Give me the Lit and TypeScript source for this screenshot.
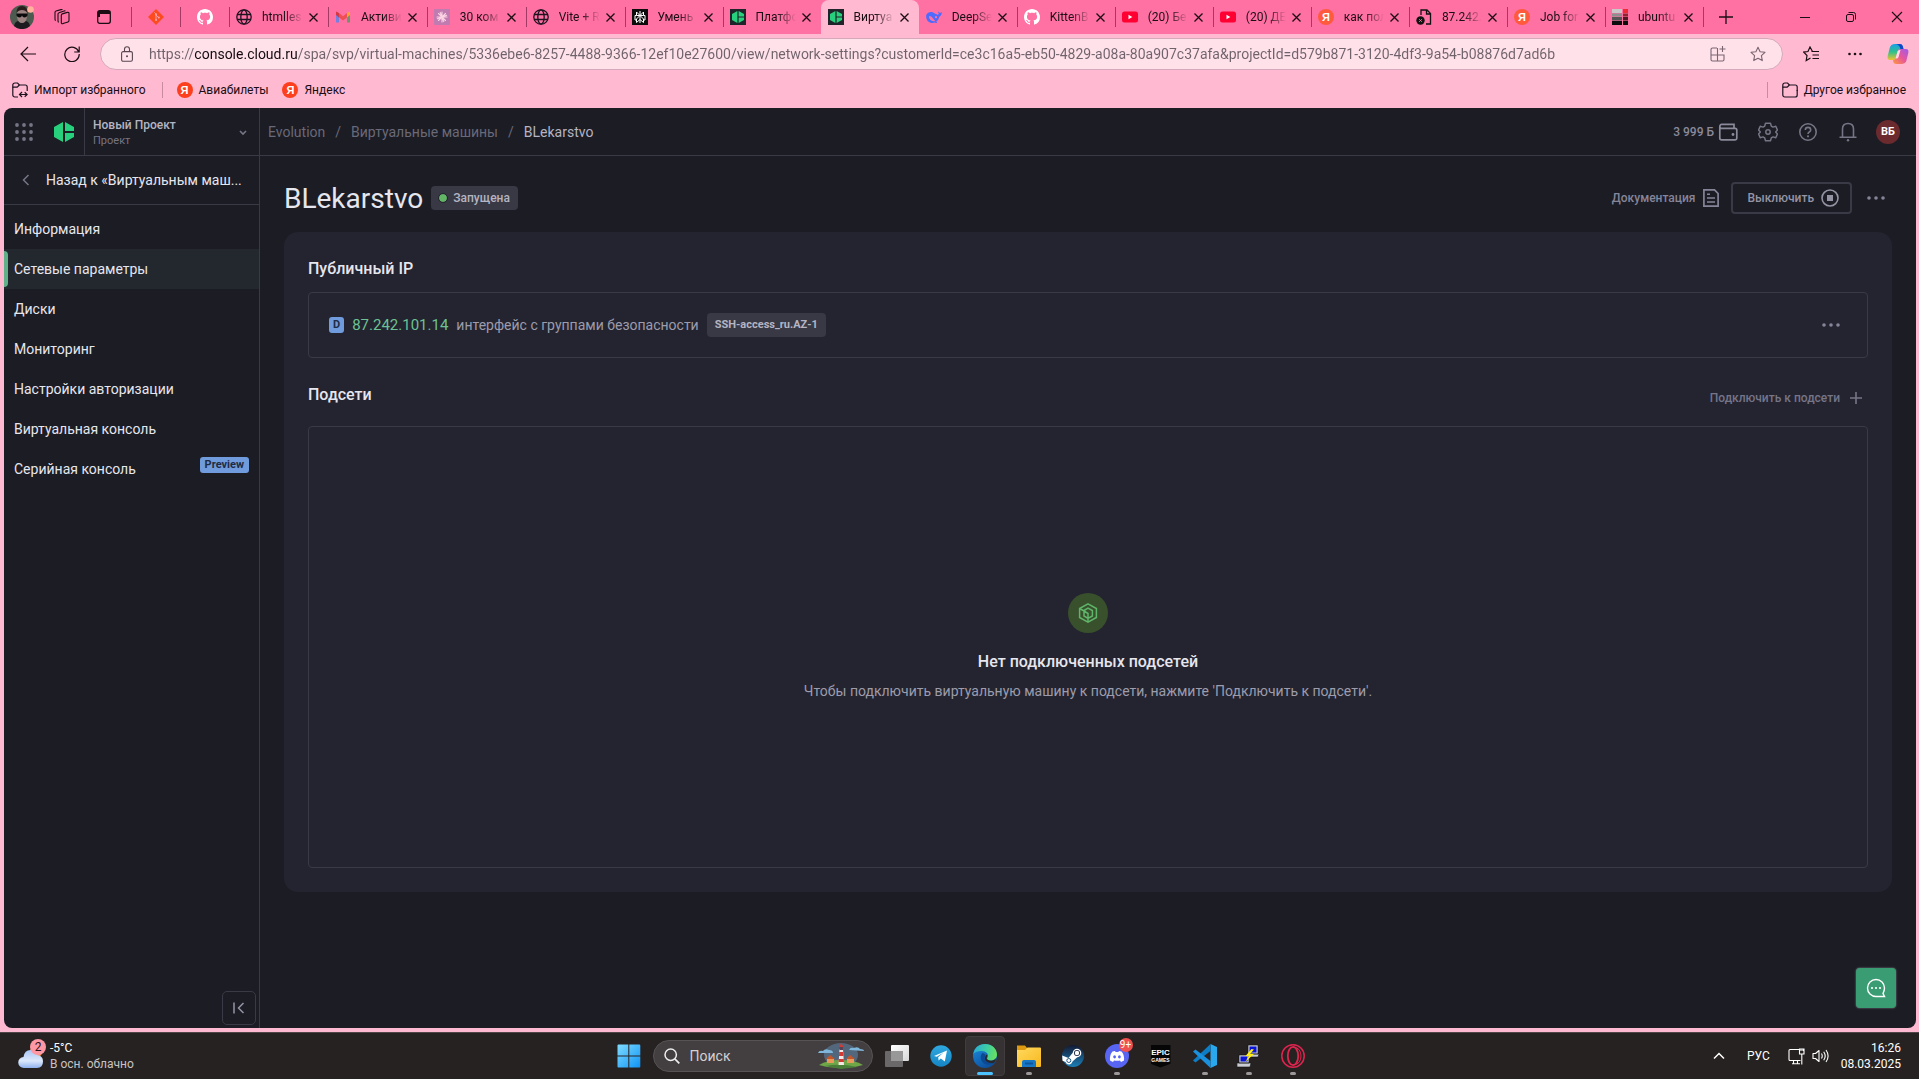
import { LitElement, html, svg, css, type TemplateResult } from "lit";
import { customElement } from "lit/decorators.js";
import { classMap } from "lit/directives/class-map.js";

const icon = (w: number, h: number, box: string, body: unknown) =>
  html`<svg width=${w} height=${h} viewBox=${box} fill="none" aria-hidden="true">${body}</svg>`;

const base = css`
  :host, *, *::before, *::after { box-sizing: border-box; }
  svg { display: block; flex: none; }
  button, input { font: inherit; color: inherit; margin: 0; padding: 0; border: 0; background: none; outline: none; }
  button { display: flex; align-items: center; justify-content: center; cursor: pointer; white-space: nowrap; }
  a { color: inherit; text-decoration: none; white-space: nowrap; }
  h1, h2, p { margin: 0; font-weight: 400; }
`;

/* ---------- favicons ---------- */

const GITHUB = "M8 0C3.58 0 0 3.58 0 8c0 3.54 2.29 6.53 5.47 7.59.4.07.55-.17.55-.38 0-.19-.01-.82-.01-1.49-2.01.37-2.53-.49-2.69-.94-.09-.23-.48-.94-.82-1.13-.28-.15-.68-.52-.01-.53.63-.01 1.08.58 1.23.82.72 1.21 1.87.87 2.33.66.07-.52.28-.87.51-1.07-1.78-.2-3.64-.89-3.64-3.95 0-.87.31-1.59.82-2.15-.08-.2-.36-1.02.08-2.12 0 0 .67-.21 2.2.82.64-.18 1.32-.27 2-.27s1.36.09 2 .27c1.53-1.04 2.2-.82 2.2-.82.44 1.1.16 1.92.08 2.12.51.56.82 1.27.82 2.15 0 3.07-1.87 3.75-3.65 3.95.29.25.54.73.54 1.48 0 1.07-.01 1.93-.01 2.2 0 .21.15.46.55.38A8.01 8.01 0 0 0 16 8c0-4.42-3.58-8-8-8z";

const github = icon(16, 16, "0 0 16 16", svg`<path fill="#fff" d=${GITHUB} />`);

const globe = icon(16, 16, "0 0 16 16", svg`
  <g stroke="#1d1220" stroke-width="1.3">
    <circle cx="8" cy="8" r="7.2" /><ellipse cx="8" cy="8" rx="3.2" ry="7.2" />
    <path d="M1.3 5.5h13.4M1.3 10.5h13.4" />
  </g>`);

const gmail = icon(16, 16, "0 0 16 16", svg`
  <g opacity=".72">
    <path d="M1 4.5v9h3V7z" fill="#4285f4" /><path d="M15 4.5v9h-3V7z" fill="#34a853" />
    <path d="M12 4l3-1.5V6l-3 2.4z" fill="#fbbc04" /><path d="M1 2.5L4 4v4.4L1 6z" fill="#c5221f" />
    <path d="M4 4l4 3.2L12 4v4.4l-4 3.1-4-3.1z" fill="#ea4335" />
  </g>`);

const burst = icon(16, 16, "0 0 16 16", svg`
  <rect width="16" height="16" rx="1" fill="#c07bb0" />
  <g stroke="#fbd3e4" stroke-width="1.1" stroke-linecap="round">
    <path d="M8 3v10M3 8h10M4.5 4.5l7 7M11.5 4.5l-7 7M6.2 3.4l3.6 9.2M3.4 9.8l9.2-3.6" />
  </g>`);

const perplexity = icon(16, 16, "0 0 16 16", svg`
  <rect width="16" height="16" fill="#0b0b0b" />
  <g stroke="#fff" stroke-width="1">
    <path d="M8 2v12M4.5 3L8 6.5 11.5 3v3.5h-7zM4.5 6.5H3v4.5h1.5M11.5 6.5H13v4.5h-1.5M8 6.5L4.5 10v3.5L8 10.5l3.5 3V10z" />
  </g>`);

const CLOUD_MARK = svg`
  <path d="M9 0v20L0 15V5z" /><path d="M11 0l9 5v4h-9z" /><path d="M11 11h9v4l-9 5z" />`;

const cloudFav = icon(16, 16, "0 0 16 16", svg`
  <rect width="16" height="16" fill="#20242a" />
  <g fill="#26d07c" transform="translate(2 2) scale(.6)">${CLOUD_MARK}</g>`);

const deepseek = icon(16, 16, "0 0 16 16", svg`
  <path fill="#4d6bfe" d="M15.8 3.3c-.7-.3-1 .4-1.5.6-.9-.1-1.6-.7-1.8-1.6-.3.6-.3 1.6.4 2.3-.6.9-.8 1.1-1.4 1.1C10 5.1 8.600 4 7.100 3.400 4.500 2.500 1.500 3.300.5 5.500c-.9 2.200-.1 5.100 1.500 6.700 1.800 1.800 4.400 2.300 6.700 1.400.8.300 1.700.5 2.500.1-.2-.4-.7-.5-1-.9 1.700-1.200 2.700-3.100 3.100-5.100C14.900 6.900 15.900 5.400 15.800 3.300z" />
  <path fill="#ff70a3" d="M3 7c2 .1 3.300 1.300 4.300 2.800.6.9 1.200 1.700 2.100 2.100C6 13 2.800 10.600 3 7z" />
  <circle cx="10" cy="8.200" r="1.100" fill="#ff70a3" />`);

const youtube = icon(16, 16, "0 0 16 16", svg`
  <rect y="2.500" width="16" height="11" rx="2.500" fill="#f03" /><path d="M6.500 5.800L10.300 8l-3.800 2.200z" fill="#fff" />`);

const docX = icon(16, 16, "0 0 16 16", svg`
  <path d="M5 6V1h6l3.500 3.500V15H10M10.500 1v4h4" stroke="#111" stroke-width="1.300" />
  <circle cx="4.500" cy="11.500" r="4.200" fill="#111" />
  <path d="M3.200 10.200l2.600 2.600M5.800 10.200l-2.600 2.600" stroke="#ff70a3" />`);

const ubuntuGrid = icon(16, 16, "0 0 16 16", svg`
  <path fill="#c9c9c9" d="M0 0h10v4H0z" /><path fill="#8f8f8f" d="M0 4.500h10v3H0z" />
  <path fill="#555" d="M0 8h10v3.500H0z" /><path fill="#0c0c0c" d="M0 12h10v4H0z" />
  <path fill="#ee2a35" d="M11 0h5v4h-5z" /><path fill="#8c2530" d="M11 4.500h5v3h-5z" />
  <path fill="#4d1a22" d="M11 8h5v3.500h-5z" /><path fill="#0c0c0c" d="M11 12h5v4h-5z" />`);

const yandex = html`<span class="ya">Я</span>`;

interface Tab { title: string; icon: TemplateResult; active?: boolean; }

const TABS: Tab[] = [
  { title: "htmlles", icon: globe },
  { title: "Активи", icon: gmail },
  { title: "30 ком", icon: burst },
  { title: "Vite + R", icon: globe },
  { title: "Умень", icon: perplexity },
  { title: "Платфо", icon: cloudFav },
  { title: "Виртуа", icon: cloudFav, active: true },
  { title: "DeepSe", icon: deepseek },
  { title: "KittenB", icon: github },
  { title: "(20) Бе", icon: youtube },
  { title: "(20) ДЕ", icon: youtube },
  { title: "как пол", icon: yandex },
  { title: "87.242.", icon: docX },
  { title: "Job for", icon: yandex },
  { title: "ubuntu", icon: ubuntuGrid },
];

const URL_TEXT =
  "https://console.cloud.ru/spa/svp/virtual-machines/5336ebe6-8257-4488-9366-12ef10e27600/view/network-settings?customerId=ce3c16a5-eb50-4829-a08a-80a907c37afa&projectId=d579b871-3120-4df3-9a54-b08876d7ad6b";

const folder = (extra: unknown) => icon(16, 16, "0 0 16 16", svg`
  <g stroke="#1d1220" stroke-width="1.200">
    <path d="M.8 5.200V3a2 2 0 0 1 2-2h2.700l1.900 2h5.800a2 2 0 0 1 2 2v4" /><path d="M.8 5.200h4.400l2.200-2.200" />${extra}
  </g>`);

@customElement("browser-chrome")
export class BrowserChrome extends LitElement {
  static styles = [base, css`
    :host { display: block; font: 12px/16px Roboto, "Noto Sans", sans-serif; color: #1a0d14; background: #ffb9d0; }
    .strip { display: flex; height: 34px; background: #ff70a3; }
    .pinned { display: flex; width: 229px; }
    .lead { display: flex; align-items: center; width: 131px; padding-left: 10px; gap: 20px; }
    .lead .vertical { margin-left: 7px; }
    .pin { width: 49px; position: relative; }
    .pin::before, .tab::before { content: ""; position: absolute; left: 0; top: 7px; width: 1px; height: 20px; background: #a33a64; }
    .tabs { display: flex; flex: 1; min-width: 0; }
    .tab { position: relative; display: flex; align-items: center; flex: 98; min-width: 0; padding: 0 10px 0 7px; }
    .tab:nth-child(-n + 4) { flex-grow: 99; }
    .tab.active { background: #ffb9d0; border-radius: 8px 8px 0 0; }
    .tab.active::before, .tab.active + .tab::before { display: none; }
    .title { flex: 1; min-width: 0; justify-content: flex-start; overflow: hidden; margin: 0 4px 0 10px;
      mask-image: linear-gradient(90deg, #000 50%, transparent 95%); }
    .ya { display: flex; align-items: center; justify-content: center; flex: none; width: 16px; height: 16px;
      border-radius: 50%; background: #fc3f1d; color: #fff; font: 700 11px/16px "Liberation Sans", sans-serif; }
    .tab .ya { background: #ff5a3c; }
    .end { position: relative; display: flex; align-items: center; width: 216px; padding-right: 16px; }
    .end::before { content: ""; width: 1px; height: 20px; background: #a33a64; margin-right: 15px; }
    .window { display: flex; align-items: center; gap: 34px; margin-left: auto; }
    .bar { display: flex; align-items: center; height: 40px; padding: 0 10px 0 20px; }
    .bar .reload { margin: 0 20px 0 28px; }
    .field { display: flex; align-items: center; flex: 1; height: 32px; margin-right: 20px; padding: 0 16px 0 20px;
      border: 1px solid #d5a9bb; border-radius: 16px; background: #ffe1ea; color: #6a5560; }
    .field input { flex: 1; min-width: 0; margin: 0 20px 0 16px; font-size: 14px; line-height: 20px; color: transparent;
      background: linear-gradient(90deg, #6f626a 46px, #120a0e 46px, #120a0e 148px, #6f626a 148px);
      -webkit-background-clip: text; background-clip: text; }
    .right { display: flex; align-items: center; gap: 24px; }
    .fav { margin-right: 4px; }
    .marks { display: flex; align-items: center; height: 32px; padding: 0 13px 0 12px; gap: 14px; }
    .marks a { display: flex; align-items: center; gap: 6px; }
    .marks i { width: 1px; height: 16px; margin-left: 2px; background: #c98ba2; }
    .marks .push { margin-left: auto; }
  `];

  render() {
    const close = icon(9, 9, "0 0 9 9", svg`<path d="M.5.500l8 8M8.500.500l-8 8" stroke="#1a0d14" stroke-width="1.300" />`);
    return html`
      <div class="strip">
        <div class="pinned">
          <div class="lead">
            <button aria-label="Профиль">${icon(24, 24, "0 0 24 24", svg`
              <circle cx="12" cy="12" r="12" fill="#4d5a50" /><path d="M4 21q1-5 5-5h6q4 0 5 5a12 12 0 0 1-16 0z" fill="#1b1b20" />
              <path d="M7 8q0-6 5-6t5 6v4q-1 6-5 6t-5-6z" fill="#9a8280" /><path d="M6.500 8q0-7 5.500-7t5.500 7q-2-3-5.500-3t-5.500 3z" fill="#2b1d1c" />
              <path d="M6.500 8.500h11v2q-1 2-3 2t-2.500-2q-.5 2-2.500 2t-3-2z" fill="#0a0a0c" />
              <circle cx="20.500" cy="4.500" r="3.300" fill="#ffb39d" />`)}</button>
            <button aria-label="Рабочие области">${icon(16, 16, "0 0 16 16", svg`
              <g stroke="#1a0d14" stroke-width="1.100" stroke-linejoin="round"><path d="M7.300 6.200q0-1 1-1.300l5-1.500q1.700-.4 1.700 1.200v7q0 1-1 1.300l-5 1.700q-1.700.5-1.700-1.200z" />
              <path d="M4.800 13.300q-.8-.3-.8-1.300V5q0-1 1-1.300l5-1.700q1-.3 1.400.3M1.800 11.500q-.8-.3-.8-1.300V3.300q0-1 1-1.300L7 .600q1-.3 1.400.3" /></g>`)}</button>
            <button class="vertical" aria-label="Вертикальные вкладки">${icon(14, 14, "0 0 14 14", svg`
              <rect x=".7" y=".7" width="12.600" height="12.600" rx="2" stroke="#1a0d14" stroke-width="1.300" />
              <path d="M1 1h12v3H1zM1 1h2v6H1z" fill="#1a0d14" />`)}</button>
          </div>
          <button class="pin" aria-label="Git">${icon(16, 16, "0 0 16 16", svg`
            <path d="M8 0l8 8-8 8-8-8z" fill="#fc4c1f" /><path d="M6.500 3.500L8 5v6M8 6l2.700 2.700" stroke="#ff9fb0" stroke-width="1" />
            <circle cx="8" cy="5.300" r="1" fill="#ff9fb0" /><circle cx="8" cy="11" r="1" fill="#ff9fb0" /><circle cx="10.800" cy="8.400" r="1" fill="#ff9fb0" />`)}</button>
          <button class="pin" aria-label="GitHub">${github}</button>
        </div>
        <div class="tabs">
          ${TABS.map((t) => html`
            <div class=${classMap({ tab: true, active: !!t.active })}>
              ${t.icon}<button class="title">${t.title}</button><button aria-label="Закрыть вкладку">${close}</button>
            </div>`)}
        </div>
        <div class="end">
          <button aria-label="Новая вкладка">${icon(14, 14, "0 0 14 14", svg`<path d="M7 0v14M0 7h14" stroke="#1a0d14" stroke-width="1.300" />`)}</button>
          <div class="window">
            <button aria-label="Свернуть">${icon(12, 12, "0 0 12 12", svg`<path d="M1 6.500h10" stroke="#1a0d14" />`)}</button>
            <button aria-label="Восстановить">${icon(12, 12, "0 0 12 12", svg`
              <g stroke="#1a0d14"><rect x="1.500" y="3.500" width="7" height="7" rx="1.500" /><path d="M3.500 1.500h5a2 2 0 0 1 2 2v5" /></g>`)}</button>
            <button aria-label="Закрыть">${icon(12, 12, "0 0 12 12", svg`<path d="M1 1l10 10M11 1L1 11" stroke="#1a0d14" stroke-width="1.100" />`)}</button>
          </div>
        </div>
      </div>
      <div class="bar">
        <button aria-label="Назад">${icon(16, 16, "0 0 16 16", svg`<path d="M16 8H1M8 1L1 8l7 7" stroke="#1a0d14" stroke-width="1.200" />`)}</button>
        <button class="reload" aria-label="Обновить">${icon(16, 16, "0 0 16 16", svg`
          <path d="M14.800 6A7.200 7.200 0 1 0 15.200 8M15.200.500V6h-5" stroke="#1a0d14" stroke-width="1.200" />`)}</button>
        <div class="field">
          ${icon(12, 16, "0 0 12 16", svg`<rect x=".6" y="5.600" width="10.800" height="9.600" rx="1.500" stroke="#5a4650" stroke-width="1.100" />
            <path d="M3.500 5.500V3.300a2.500 2.500 0 0 1 5 0v2.200" stroke="#5a4650" stroke-width="1.100" /><circle cx="6" cy="10.300" r="1" fill="#5a4650" />`)}
          <input type="text" aria-label="Адресная строка" .value=${URL_TEXT} />
          <div class="right">
            <button aria-label="Установить приложение">${icon(16, 16, "0 0 16 16", svg`
              <path d="M7 2H2.500Q1 2 1 3.500v10Q1 15 2.500 15h10q1.500 0 1.500-1.500V9H1M7.500 2v13M12.500 0v6M9.500 3h6" stroke="#7a6570" stroke-width="1.100" />`)}</button>
            <button aria-label="Добавить в избранное">${icon(16, 16, "0 0 16 16", svg`
              <path d="M8 1.200l2.100 4.500 4.900.6-3.600 3.400.9 4.900L8 12.200l-4.300 2.400.9-4.900L1 6.300l4.900-.6z" stroke="#7a6570" stroke-width="1.100" stroke-linejoin="round" />`)}</button>
          </div>
        </div>
        <div class="right">
          <button class="fav" aria-label="Избранное">${icon(16, 16, "0 0 16 16", svg`
            <path d="M9.500 5.500L7 1 5 5.500l-4.300.6L4 9.500l-.8 5L7.500 12M8.500 5.500H16M9.500 9H16M9.500 12.500H16" stroke="#1a0d14" stroke-width="1.200" />`)}</button>
          <button aria-label="Ещё">${icon(16, 16, "0 0 16 16", svg`<g fill="#1a0d14"><circle cx="2.500" cy="8" r="1.300" /><circle cx="8" cy="8" r="1.300" /><circle cx="13.500" cy="8" r="1.300" /></g>`)}</button>
          <button aria-label="Copilot">${icon(22, 20, "0 0 22 20", svg`
            <defs><linearGradient id="c1" x1="0" y1="0" x2="0" y2="1"><stop stop-color="#1ba0e8" /><stop offset=".5" stop-color="#2fc08c" /><stop offset="1" stop-color="#f2c22e" /></linearGradient>
            <linearGradient id="c2" x1="1" y1="0" x2="0" y2="1"><stop stop-color="#9a5cf0" /><stop offset=".5" stop-color="#e8569b" /><stop offset="1" stop-color="#ff9a3d" /></linearGradient></defs>
            <path d="M8 0h5q2 0 2.700 2l.8 3h-3q-2 0-2.700 2l-2 7q-.6 2-2.600 2H3q-3 0-2.300-4l2-8Q3.700 0 8 0z" fill="url(#c1)" />
            <path d="M14 20H9q-2 0-2.700-2l-.3-2q2 0 2.700-2l2-7q.6-2 2.600-2H19q3 0 2.300 4l-2 8Q18.300 20 14 20z" fill="url(#c2)" />
            <path d="M8 0h5q2 0 2.700 2l.8 3h-3Q12 0 8 0z" fill="#1546c8" />
            <path d="M10.500 7.500q.5-1.500 2-1.500h1l-2 7q-.5 1.500-2 1.500h-1z" fill="#ffd9e4" />`)}</button>
        </div>
      </div>
      <nav class="marks" aria-label="Закладки">
        <a href="#">${folder(svg`<path d="M.8 5v8a2 2 0 0 0 2 2H6M7.500 12.500H15M10 10l-2.500 2.500L10 15M12.700 10.300l2.400 2.200-2.400 2.300" />`)}Импорт избранного</a>
        <i></i>
        <a href="#">${yandex}Авиабилеты</a>
        <a href="#">${yandex}Яндекс</a>
        <i class="push"></i>
        <a href="#">${folder(svg`<path d="M.8 5v8a2 2 0 0 0 2 2h10.400a2 2 0 0 0 2-2V8" />`)}Другое избранное</a>
      </nav>`;
  }
}

/* ---------- cloud console ---------- */

const dots = icon(18, 6, "0 0 18 6", svg`<g fill="currentColor"><circle cx="2" cy="3" r="1.800" /><circle cx="9" cy="3" r="1.800" /><circle cx="16" cy="3" r="1.800" /></g>`);

const MENU: { label: string; active?: boolean; badge?: string }[] = [
  { label: "Информация" },
  { label: "Сетевые параметры", active: true },
  { label: "Диски" },
  { label: "Мониторинг" },
  { label: "Настройки авторизации" },
  { label: "Виртуальная консоль" },
  { label: "Серийная консоль", badge: "Preview" },
];

@customElement("cloud-console")
export class CloudConsole extends LitElement {
  static styles = [base, css`
    :host { display: flex; flex-direction: column; position: relative; border-radius: 8px; overflow: hidden;
      background: #1c1c24; color: #e6e6ee; font: 14px/20px Roboto, "Noto Sans", sans-serif; }
    .top { display: flex; height: 48px; border-bottom: 1px solid #3a3a46; }
    .brand { display: flex; width: 256px; border-right: 1px solid #3a3a46; color: #757585; }
    .marks { display: flex; align-items: center; gap: 21px; width: 81px; padding-left: 11px; border-right: 1px solid #3a3a46; }
    .project { flex: 1; justify-content: space-between; padding: 2px 12px 0 8px; text-align: left; }
    .project b { display: block; font: 500 12px/16px Roboto, sans-serif; color: #b4b4c2; }
    .project small { display: block; font-size: 11px; line-height: 16px; color: #757585; }
    .crumbs { display: flex; align-items: center; flex: 1; gap: 10px; padding-left: 8px; color: #696978; }
    .crumbs b { font-weight: 400; color: #b4b4c2; }
    .tools { display: flex; align-items: center; gap: 20px; padding-right: 16px; color: #757585; }
    .tools .sum { gap: 4px; font: 500 12px/16px Roboto, sans-serif; color: #8a8a9a; }
    .user { width: 24px; height: 24px; margin-left: -2px; border-radius: 50%; background: #6b2a2e; color: #fff; font: 700 11px/16px Roboto, sans-serif; }
    .body { display: flex; flex: 1; min-height: 0; }
    .side { display: flex; flex-direction: column; width: 256px; border-right: 1px solid #3a3a46; }
    .back { display: flex; align-items: center; height: 49px; gap: 16px; padding: 0 11px 0 18px; border-bottom: 1px solid #3a3a46; }
    .back svg { color: #757585; }
    .back span { overflow: hidden; text-overflow: ellipsis; }
    .menu { padding-top: 4px; }
    .menu a { display: flex; align-items: center; justify-content: space-between; height: 40px; padding: 0 10px; }
    .menu .active { position: relative; background: #23282e; }
    .menu .active::before { content: ""; position: absolute; left: 0; top: 2px; width: 4px; height: 36px; border-radius: 0 4px 4px 0; background: #62b08a; }
    .tag { padding: 0 5px; margin-bottom: 8px; border-radius: 3px; background: #709bdc; color: #1f2c45; font: 700 11px/16px Roboto, sans-serif; }
    .fold { width: 34px; height: 34px; margin: auto 3px 3px auto; border: 1px solid #3a3a46; border-radius: 5px; color: #9494a4; }
    .main { flex: 1; min-width: 0; padding: 24px 24px 0; }
    .head { display: flex; align-items: center; height: 36px; padding-right: 7px; gap: 8px; }
    h1 { padding-top: 2px; font-size: 28px; line-height: 36px; }
    .chip { display: flex; align-items: center; height: 24px; gap: 6px; padding: 0 8px; border-radius: 4px; background: #393945;
      color: #b4b4c2; font: 500 12px/24px Roboto, sans-serif; }
    .chip.small { font-weight: 700; font-size: 11px; }
    .live { width: 8px; height: 8px; border-radius: 50%; background: #62b566; outline: 1px solid #24242e; }
    .actions { display: flex; align-items: center; gap: 12px; margin-left: auto; color: #85859a; font: 500 12px/16px Roboto, sans-serif; }
    .actions a, .join { display: flex; align-items: center; gap: 8px; }
    .stop { height: 32px; gap: 7px; padding: 0 11px 0 14px; border: 2px solid #3a3a46; border-radius: 4px; color: #9494a4; }
    .more { margin-left: 3px; color: #85859a; }
    .card { margin-top: 16px; padding: 24px; border-radius: 14px; background: #242430; }
    h2 { font: 500 16px/26px Roboto, sans-serif; }
    .box { border: 1px solid #3a3a46; border-radius: 4px; }
    .ip { display: flex; align-items: center; height: 66px; margin-top: 10px; padding: 0 27px 0 20px; gap: 8px; color: #9c9cac; }
    .ip .d { padding: 0 4px; border-radius: 3px; background: #709bdc; color: #1f2c45; font: 700 11px/16px Roboto, sans-serif; }
    .ip a { color: #6cc294; font-size: 15px; }
    .ip .more { margin-left: auto; }
    .row { display: flex; justify-content: space-between; align-items: flex-start; height: 32px; margin-top: 24px; }
    .join { height: 32px; padding-right: 4px; color: #757588; font: 500 12px/16px Roboto, sans-serif; }
    .empty { display: flex; flex-direction: column; align-items: center; justify-content: center; min-height: 442px; margin-top: 12px; }
    .empty h2 { margin-top: 16px; }
    .empty p { margin-top: 6px; color: #9c9cac; }
    .round { display: flex; align-items: center; justify-content: center; width: 40px; height: 40px; border-radius: 50%; background: #39502c; }
    .chat { position: absolute; right: 20px; bottom: 20px; width: 40px; height: 40px; border-radius: 4px; background: #399c72; box-shadow: 0 0 2px #8a8a9a; }
  `];

  render() {
    const nine = [2, 9, 16].flatMap((y) => [2, 9, 16].map((x) => svg`<circle cx=${x} cy=${y} r="1.900" />`));
    return html`
      <header class="top">
        <div class="brand">
          <div class="marks">
            <button aria-label="Сервисы">${icon(18, 18, "0 0 18 18", svg`<g fill="#757585">${nine}</g>`)}</button>
            <a href="#" aria-label="Cloud">${icon(20, 20, "0 0 20 20", svg`<g fill="#26d07c">${CLOUD_MARK}</g>`)}</a>
          </div>
          <button class="project"><span><b>Новый Проект</b><small>Проект</small></span>
            ${icon(8, 6, "0 0 8 6", svg`<path d="M1 1l3 3 3-3" stroke="currentColor" stroke-width="1.600" />`)}</button>
        </div>
        <nav class="crumbs" aria-label="Путь">
          <a href="#">Evolution</a><span>/</span><a href="#">Виртуальные машины</a><span>/</span><b>BLekarstvo</b>
        </nav>
        <div class="tools">
          <button class="sum">3 999 Б ${icon(20, 20, "0 0 20 20", svg`
            <path d="M1.800 5v11q0 1.800 1.800 1.800h13.600q1.600 0 1.600-1.600V8q0-1.700-1.700-1.700H3.500Q1.800 6.300 1.800 4.700q0-2.300 2-2.300H16v4" stroke="currentColor" stroke-width="1.700" /><circle cx="15" cy="12.500" r="1.400" fill="currentColor" />`)}</button>
          <button aria-label="Настройки">${icon(20, 20, "0 0 20 20", svg`
            <path d="M7.500 1.300h5l.8 2.800 1.700 1 2.800-.8 1.600 3.700-1.700 2 1.700 2-1.600 3.700-2.800-.8-1.700 1-.8 2.800h-5l-.8-2.800-1.700-1-2.800.8L.6 12l1.700-2L.6 8l1.600-3.700 2.800.8 1.700-1z" stroke="currentColor" stroke-width="1.500" stroke-linejoin="round" /><circle cx="10" cy="10" r="2.200" stroke="currentColor" stroke-width="1.500" />`)}</button>
          <button aria-label="Помощь">${icon(20, 20, "0 0 20 20", svg`
            <g stroke="currentColor" stroke-width="1.600"><circle cx="10" cy="10" r="8.200" /><path d="M7.300 8q0-2.600 2.700-2.600T12.700 8q0 1.300-1.400 2-1.300.7-1.300 2" /></g><circle cx="10" cy="14.300" r="1.100" fill="currentColor" />`)}</button>
          <button aria-label="Уведомления">${icon(20, 20, "0 0 20 20", svg`
            <path d="M1.500 15.200h17M4.500 15V7q0-5.500 5.500-5.500T15.500 7v8" stroke="currentColor" stroke-width="1.600" /><circle cx="10" cy="18.300" r="1.200" fill="currentColor" />`)}</button>
          <button class="user">ВБ</button>
        </div>
      </header>
      <div class="body">
        <aside class="side">
          <a class="back" href="#">${icon(8, 12, "0 0 8 12", svg`<path d="M6.500 1L1.500 6l5 5" stroke="currentColor" stroke-width="1.500" />`)}<span>Назад к «Виртуальным маш...</span></a>
          <nav class="menu" aria-label="Разделы">
            ${MENU.map((m) => html`<a href="#" class=${classMap({ active: !!m.active })}>${m.label}${m.badge ? html`<span class="tag">${m.badge}</span>` : ""}</a>`)}
          </nav>
          <button class="fold" aria-label="Свернуть меню">${icon(12, 12, "0 0 12 12", svg`<path d="M1 .500v11M10.500 1L5.500 6l5 5" stroke="currentColor" stroke-width="1.500" />`)}</button>
        </aside>
        <main class="main">
          <div class="head">
            <h1>BLekarstvo</h1>
            <span class="chip"><i class="live"></i>Запущена</span>
            <div class="actions">
              <a href="#">Документация ${icon(16, 18, "0 0 16 18", svg`
                <path d="M.900.900h10.600l3.600 3.600v12.600H.900z" stroke="currentColor" stroke-width="1.700" /><path d="M4 5.200h3M4 9h8M4 13h8" stroke="currentColor" stroke-width="1.500" />`)}</a>
              <button class="stop">Выключить ${icon(18, 18, "0 0 18 18", svg`
                <circle cx="9" cy="9" r="8" stroke="currentColor" stroke-width="1.600" /><rect x="6" y="6" width="6" height="6" fill="currentColor" />`)}</button>
              <button class="more" aria-label="Действия">${dots}</button>
            </div>
          </div>
          <section class="card">
            <h2>Публичный IP</h2>
            <div class="box ip">
              <span class="d">D</span><a href="#">87.242.101.14</a><span>интерфейс с группами безопасности</span>
              <span class="chip small">SSH-access_ru.AZ-1</span>
              <button class="more" aria-label="Действия с адресом">${dots}</button>
            </div>
            <div class="row">
              <h2>Подсети</h2>
              <button class="join">Подключить к подсети ${icon(16, 16, "0 0 16 16", svg`<path d="M8 2v12M2 8h12" stroke="currentColor" stroke-width="1.600" />`)}</button>
            </div>
            <div class="box empty">
              <div class="round">${icon(20, 20, "0 0 20 20", svg`
                <g stroke="#5fb56a" stroke-width="1.500"><path d="M10 .900l8.400 4.600v9L10 19.100l-8.400-4.600v-9z" /><path d="M1.600 5.500L6 8l4 2.500V19M6 8v5l4 2.500 4.400-2.500V7.500L10 5.200 6 7.500" /></g>`)}</div>
              <h2>Нет подключенных подсетей</h2>
              <p>Чтобы подключить виртуальную машину к подсети, нажмите 'Подключить к подсети'.</p>
            </div>
          </section>
        </main>
      </div>
      <button class="chat" aria-label="Чат">${icon(20, 20, "0 0 20 20", svg`
        <path d="M18.500 18.500H10a8.500 8.500 0 1 1 8.500-8.500q0 2.500-1.500 5.500z" stroke="#fff" stroke-width="1.400" />
        <g fill="#fff"><circle cx="6" cy="10" r="1.100" /><circle cx="10" cy="10" r="1.100" /><circle cx="14" cy="10" r="1.100" /></g>`)}</button>`;
  }
}

/* ---------- taskbar ---------- */

interface App { name: string; icon: TemplateResult; state?: string; count?: string; }

const APPS: App[] = [
  { name: "Представление задач", icon: icon(24, 24, "0 0 24 24", svg`
      <defs><linearGradient id="tv" x2="1" y2="1"><stop stop-color="#fff" /><stop offset="1" stop-color="#d8d8d8" /></linearGradient></defs>
      <rect x="6" y="1" width="18" height="16" rx="1" fill="url(#tv)" /><rect y="7" width="18" height="16" rx="1" fill="#6a6868" /><rect x="6" y="7" width="12" height="10" fill="#989898" />`) },
  { name: "Telegram", icon: icon(24, 24, "0 0 24 24", svg`
      <defs><linearGradient id="tg" x2="0" y2="1"><stop stop-color="#2fa8e0" /><stop offset="1" stop-color="#1586c4" /></linearGradient></defs>
      <circle cx="12" cy="12" r="10.700" fill="url(#tg)" /><path d="M5 12l13-5.500-2.200 11-4-3-2.200 2-.4-3.300 5.300-4.700-6.700 4.300z" fill="#fff" />`) },
  { name: "Microsoft Edge", state: "current", icon: icon(24, 24, "0 0 24 24", svg`
      <defs><linearGradient id="e1" x1="0" y1=".2" x2="1" y2=".4"><stop stop-color="#2aa9d8" /><stop offset=".6" stop-color="#3fcfa0" /><stop offset="1" stop-color="#68e060" /></linearGradient>
      <linearGradient id="e2" x1="0" y1="0" x2=".6" y2="1"><stop stop-color="#1d8fe0" /><stop offset="1" stop-color="#0d4f9e" /></linearGradient></defs>
      <circle cx="12" cy="12" r="12" fill="url(#e2)" />
      <path d="M.3 10C1.300 3.600 6 0 12 0c7 0 12 4.800 12 10.500 0 3.500-2.600 6-6 6-2.800 0-4.600-1.200-3.600-2.700C16.500 10 13 7 8.500 7 4.800 7 1.800 8.300.3 10z" fill="url(#e1)" />
      <path d="M13.500 10.500c1.500 1.500 0 2.800.2 4 .3 1.300 2 2.200 4.300 2.200 2.200 0 4-.9 5-2.200-.3 1.700-1 3.200-2 4.500-2 .8-4.500.9-6.300 0-3-1.400-3.900-5.500-1.200-8.500z" fill="#2b2728" />
      <path d="M9.300 9c-3 3.500-1.600 10 4 11.500 3 .8 6.200-.3 7.500-2-2 .8-4 .8-5.800-.2-3.400-1.900-3.800-4.800-2.500-7C12 10 11 9 9.300 9z" fill="#0c4a94" />`) },
  { name: "Проводник", state: "open", icon: icon(24, 24, "0 0 24 24", svg`
      <defs><linearGradient id="fo" x2="1" y2="1"><stop stop-color="#ffd95e" /><stop offset="1" stop-color="#f8b81e" /></linearGradient></defs>
      <path d="M0 1.500h8l2.500 3V8H0z" fill="#dd9a10" /><path d="M0 6h8l2.500-2.500H23q1 0 1 1V22q0 1-1 1H1q-1 0-1-1z" fill="url(#fo)" /><path d="M5 23v-5q0-2 2-2h10q2 0 2 2v5z" fill="#1778c8" /><path d="M8 19.500h8" stroke="#0c569c" stroke-width="2" />`) },
  { name: "Steam", icon: icon(24, 24, "0 0 24 24", svg`
      <defs><linearGradient id="st" x2="0" y2="1"><stop stop-color="#131a33" /><stop offset="1" stop-color="#1c80b8" /></linearGradient></defs>
      <circle cx="12" cy="12" r="11" fill="url(#st)" /><path d="M1.200 11.500l6.300 2.500 4-5 5 4-5 4.500q-1 3-3.500 3t-3.500-2.500l-3-1.200z" fill="#fff" />
      <circle cx="16" cy="9" r="4.300" fill="#fff" /><circle cx="16" cy="9" r="3" fill="#17213d" /><circle cx="16" cy="9" r="2.200" fill="#fff" /><circle cx="7.800" cy="16.500" r="2" stroke="#1b5b8a" />`) },
  { name: "Discord", state: "open", count: "9+", icon: icon(24, 24, "0 0 24 24", svg`
      <circle cx="12" cy="12" r="12" fill="#5865f2" /><path d="M5 16.500Q4.500 10.500 7.500 7.500L10 7l.6 1h2.800l.6-1 2.500.5q3 3 2.500 9L16 18l-1-1.600q-3 .8-6 0L8 18z" fill="#fff" />
      <ellipse cx="9.600" cy="12.800" rx="1.400" ry="1.600" fill="#5865f2" /><ellipse cx="14.400" cy="12.800" rx="1.400" ry="1.600" fill="#5865f2" />`) },
  { name: "Epic Games", icon: html`<span class="epic"><b>EPIC</b><small>GAMES</small></span>` },
  { name: "Visual Studio Code", state: "open", icon: icon(24, 24, "0 0 24 24", svg`
      <path d="M17.500 0L24 3v18l-6.500 3z" fill="#2aa8ee" /><path d="M17.500 0v7L2.500 18.500 0 16.500z" fill="#0d7dc4" /><path d="M17.500 24v-7L2.500 5.500 0 7.500z" fill="#1a91dc" />`) },
  { name: "PuTTY", state: "open", icon: icon(24, 24, "0 0 24 24", svg`
      <g stroke="#111" stroke-width=".6"><path d="M11 1h10v9H11zM10 10h12l-1 3H10z" fill="#c9ccd2" /><path d="M2 11h10v8H2zM0 19h14l-1 4H0z" fill="#c9ccd2" /></g>
      <path d="M12.500 2.500h7v6h-7zM3.500 12.500h7v5h-7z" fill="#0a14d8" /><path d="M14.500 5l-6 7h3.500l-4 6 9-8h-4l4-4.500z" fill="#ffee10" />`) },
  { name: "Opera GX", state: "open", icon: icon(24, 24, "0 0 24 24", svg`
      <g stroke="#e0244e"><circle cx="12" cy="12" r="11.200" stroke-width="1.500" /><ellipse cx="12" cy="12" rx="5.200" ry="9.200" stroke-width="1.800" /><path d="M12 2.800q8 1 8 9.200t-8 9.200" stroke-width="1" /></g>`) },
];

@customElement("task-bar")
export class TaskBar extends LitElement {
  static styles = [base, css`
    :host { display: grid; grid-template-columns: 1fr auto 1fr; height: 47px; border-top: 1px solid #504648; background: #262222;
      color: #fff; font: 12px/16px Roboto, "Noto Sans", sans-serif; }
    .weather { position: relative; justify-content: flex-start; justify-self: start; padding-left: 18px; gap: 6px; text-align: left; }
    .weather small { display: block; font-size: 12px; color: #c8c2c4; }
    .weather i { position: absolute; left: 30px; top: 6px; width: 16px; height: 16px; border-radius: 50%; background: #ff98a5; color: #2a1015; font-style: normal; text-align: center; }
    .center { display: flex; align-items: center; margin-right: -12px; }
    .search { display: flex; align-items: center; width: 220px; height: 32px; margin: 0 2px 0 12px; padding: 0 7px 0 10px; gap: 10px;
      border-radius: 16px; background: #433f40; border: 1px solid #575354; }
    .search input { width: 110px; flex: 1; min-width: 0; font-size: 14px; line-height: 20px; }
    .search input::placeholder { color: #d4d0d1; opacity: 1; }
    .app { position: relative; width: 44px; height: 46px; }
    .current::before { content: ""; position: absolute; inset: 3px 2px; border-radius: 4px; background: #363233; border: 1px solid #413d3e; }
    .app svg { position: relative; }
    .open::after, .current::after { content: ""; position: absolute; left: 19px; bottom: 4px; width: 6px; height: 3px; border-radius: 2px; background: #9c9899; }
    .current::after { left: 14px; width: 16px; background: #4cc2ff; }
    .count { position: absolute; right: 6px; top: 5px; width: 14px; height: 14px; border-radius: 50%; background: #f0504e; font-size: 10px; line-height: 14px; }
    .epic { display: flex; flex-direction: column; align-items: center; width: 20px; height: 23px; padding-top: 3px; background: #060606;
      clip-path: polygon(0 0, 100% 0, 100% 84%, 50% 100%, 0 84%); }
    .epic b { font: 700 8px/9px "Liberation Sans", sans-serif; }
    .epic small { font: 700 5px/6px "Liberation Sans", sans-serif; }
    .tray { display: flex; align-items: center; justify-self: end; padding-right: 18px; }
    .lang { margin: 0 18px 0 22px; }
    .net { gap: 7px; margin-right: 12px; }
    .clock { display: block; text-align: right; }
    .clock span { display: block; }
  `];

  render() {
    const scene = icon(48, 26, "0 0 48 26", svg`
      <ellipse cx="24" cy="12" rx="17" ry="12" fill="#5f86ad" opacity=".55" />
      <path d="M1 10q1-3 5-2 2-3 6-1 4 0 4 3zM32 7q1-3 5-2 4-2 6 1 4 0 4 2z" fill="#7fb6dc" />
      <path d="M2 22q8-5 22-5t22 5l-8 2-14 1-14-1z" fill="#6ea648" /><path d="M8 23q16-3 32 1l-16 2z" fill="#4a7f3a" />
      <path d="M10 16l3-3 4 3v4h-7zM30 16l3-3 4 3v4h-7z" fill="#e89a5a" /><path d="M9 16l4-4 5 4zM29 16l4-4 5 4z" fill="#c4562a" />
      <path d="M21.500 22l1-16h3.500l1 16z" fill="#f2e9e4" /><path d="M22.200 9h4l.3 4h-4.500zM21.800 16h5l.2 3h-5.400z" fill="#d23b33" />
      <path d="M22 4l2.200-4L26.500 4z" fill="#d23b33" /><path d="M22.500 4h3.500v3h-3.500z" fill="#54455a" />`);
    return html`
      <button class="weather" aria-label="Погода">
        ${icon(26, 26, "0 0 26 26", svg`
          <defs><linearGradient id="cl" x2="0" y2="1"><stop stop-color="#a9c6f4" /><stop offset=".6" stop-color="#dbe8fb" /><stop offset="1" stop-color="#8fb2ee" /></linearGradient></defs>
          <circle cx="18" cy="9" r="6" fill="#f08a24" /><path d="M6 25a5.500 5.500 0 0 1-.5-11Q6.500 7 12.500 7q5 0 6.500 5 6 .5 6 6.500T19 25z" fill="url(#cl)" />`)}
        <i>2</i><span>-5°C<small>В осн. облачно</small></span>
      </button>
      <div class="center">
        <button aria-label="Пуск">${icon(24, 24, "0 0 24 24", svg`
          <defs><linearGradient id="w" x2="1" y2="1"><stop stop-color="#7fdcff" /><stop offset="1" stop-color="#0f93f5" /></linearGradient></defs>
          <path fill="url(#w)" d="M.500 1.500Q.500.500 1.500.500h9.800v11H.500zM12.300.500h10q1 0 1 1v10h-11zM.500 12.500h10.800v11H1.500q-1 0-1-1zM12.300 12.500h11v10q0 1-1 1h-10z" />`)}</button>
        <label class="search">
          ${icon(16, 16, "0 0 16 16", svg`<circle cx="6.700" cy="6.700" r="5.700" stroke="#eee" stroke-width="1.500" /><path d="M10.800 10.800L15.300 15.300" stroke="#eee" stroke-width="1.700" />`)}
          <input type="search" placeholder="Поиск" aria-label="Поиск" />${scene}
        </label>
        ${APPS.map((a) => html`<button class=${"app " + (a.state ?? "")} aria-label=${a.name}>${a.icon}${a.count ? html`<span class="count">${a.count}</span>` : ""}</button>`)}
      </div>
      <div class="tray">
        <button aria-label="Скрытые значки">${icon(12, 8, "0 0 12 8", svg`<path d="M1 6.500l5-5 5 5" stroke="#fff" stroke-width="1.500" />`)}</button>
        <button class="lang">РУС</button>
        <button class="net" aria-label="Сеть и звук">
          ${icon(17, 17, "0 0 17 17", svg`<path d="M11 1.500H2Q1 1.500 1 2.500v9q0 1 1 1h10.500M4 15.800h8M5.500 12.500v3M9.500 12.500v3M11.500 1h4.500v5h-4.500zM13.800 6v10.500M13 1v2M15 1v2" stroke="#fff" stroke-width="1.100" />`)}
          ${icon(17, 16, "0 0 17 16", svg`<path d="M1 5.500h2.500L7 2.500v11L3.500 10.500H1zM9.500 5.500q1.500 2.500 0 5M11.700 3.700q3 4.300 0 8.600M14 2q4.200 6 0 12" stroke="#fff" stroke-width="1.100" stroke-linejoin="round" />`)}
        </button>
        <button class="clock"><span>16:26</span><span>08.03.2025</span></button>
      </div>`;
  }
}

@customElement("app-root")
export class AppRoot extends LitElement {
  static styles = css`
    :host { display: flex; flex-direction: column; min-height: 100vh; background: #ffb9d0; }
    cloud-console { flex: 1; margin: 2px 3px 4px 4px; }
  `;

  render() {
    return html`<browser-chrome></browser-chrome><cloud-console></cloud-console><task-bar></task-bar>`;
  }
}
